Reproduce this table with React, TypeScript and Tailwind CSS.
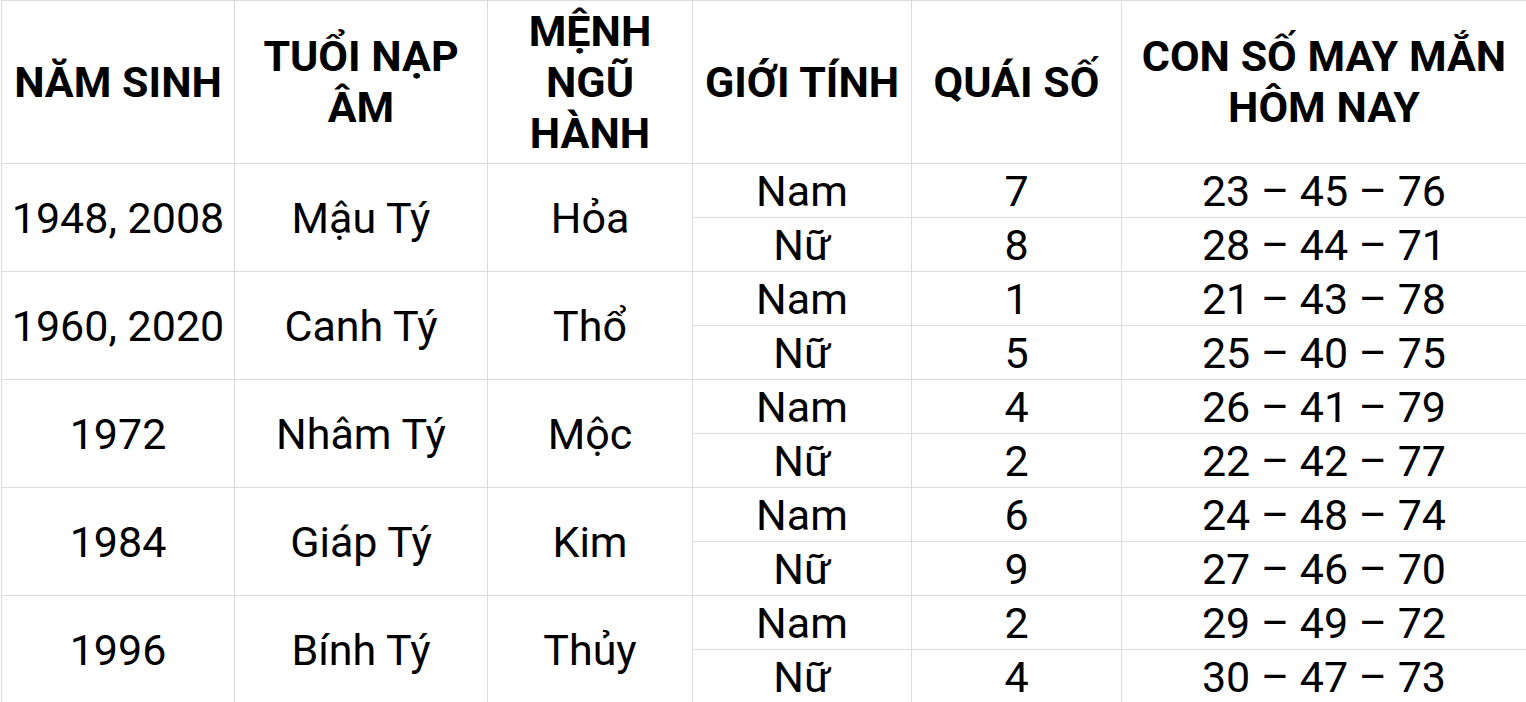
const ROWS = [
  { year: '1948, 2008', tuoi: 'Mậu Tý', menh: 'Hỏa', nam: ['7', '23 – 45 – 76'], nu: ['8', '28 – 44 – 71'] },
  { year: '1960, 2020', tuoi: 'Canh Tý', menh: 'Thổ', nam: ['1', '21 – 43 – 78'], nu: ['5', '25 – 40 – 75'] },
  { year: '1972', tuoi: 'Nhâm Tý', menh: 'Mộc', nam: ['4', '26 – 41 – 79'], nu: ['2', '22 – 42 – 77'] },
  { year: '1984', tuoi: 'Giáp Tý', menh: 'Kim', nam: ['6', '24 – 48 – 74'], nu: ['9', '27 – 46 – 70'] },
  { year: '1996', tuoi: 'Bính Tý', menh: 'Thủy', nam: ['2', '29 – 49 – 72'], nu: ['4', '30 – 47 – 73'] },
]

const cell = 'border border-[#dcdcdc] text-center align-middle p-0'

export default function App() {
  return (
    <div className="w-[1526px] h-[702px] overflow-hidden bg-white text-black font-['Roboto',sans-serif]">
      <table className="table-fixed border-collapse w-[1526px] ml-px">
        <colgroup>
          <col className="w-[233px]" />
          <col className="w-[253px]" />
          <col className="w-[205px]" />
          <col className="w-[219px]" />
          <col className="w-[210px]" />
          <col className="w-[405px]" />
        </colgroup>
        <thead>
          <tr className="h-[163px] text-[43px] font-bold leading-[51px]">
            <th className={cell}>NĂM SINH</th>
            <th className={cell}>TUỔI NẠP<br />ÂM</th>
            <th className={cell}>MỆNH<br />NGŨ<br />HÀNH</th>
            <th className={cell}>GIỚI TÍNH</th>
            <th className={cell}>QUÁI SỐ</th>
            <th className={cell}>CON SỐ MAY MẮN<br />HÔM NAY</th>
          </tr>
        </thead>
        <tbody className="text-[43px] leading-[50px]">
          {ROWS.map((r) => (
            <>
              <tr key={r.year + 'a'} className="h-[54px]">
                <td rowSpan={2} className={cell}>{r.year}</td>
                <td rowSpan={2} className={cell}>{r.tuoi}</td>
                <td rowSpan={2} className={cell}>{r.menh}</td>
                <td className={cell}>Nam</td>
                <td className={cell}>{r.nam[0]}</td>
                <td className={cell}>{r.nam[1]}</td>
              </tr>
              <tr key={r.year + 'b'} className="h-[54px]">
                <td className={cell}>Nữ</td>
                <td className={cell}>{r.nu[0]}</td>
                <td className={cell}>{r.nu[1]}</td>
              </tr>
            </>
          ))}
        </tbody>
      </table>
    </div>
  )
}
